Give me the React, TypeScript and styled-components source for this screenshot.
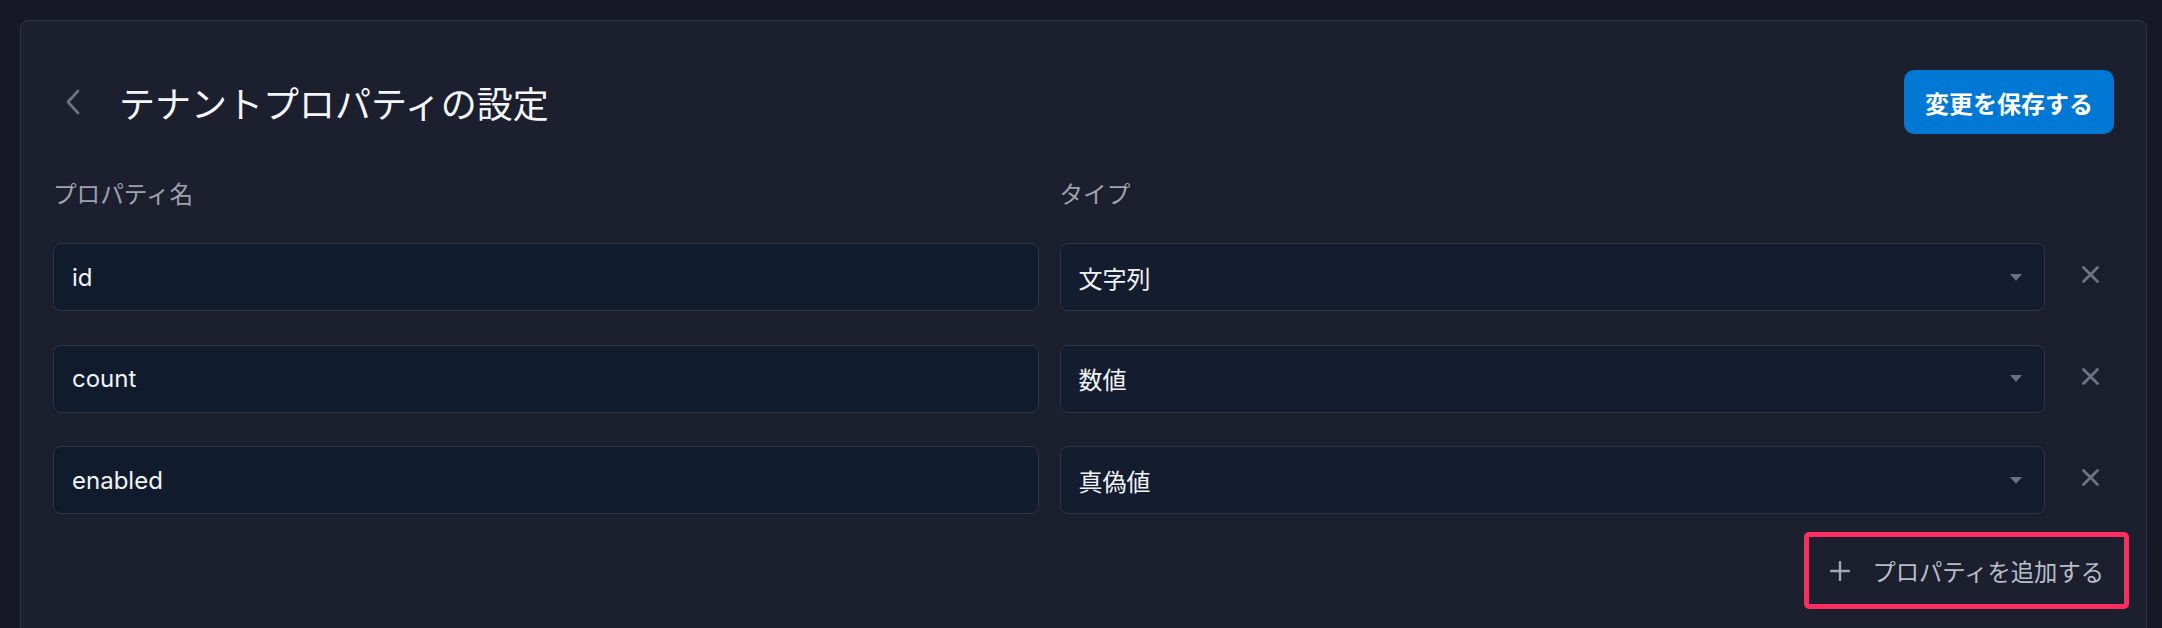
import React from "react";
import styled, { createGlobalStyle } from "styled-components";

const GlobalStyle = createGlobalStyle`
  html, body {
    margin: 0;
    padding: 0;
    background: #161925;
    overflow: hidden;
  }
  body {
    font-family: "Inter", "Noto Sans CJK JP", sans-serif;
    color: #f1f3f5;
  }
  * { box-sizing: border-box; }
`;

const Page = styled.main`
  padding: 20px 15px 0 20px;
`;

const Card = styled.section`
  background: #1c1f2e;
  border: 1px solid #30344a;
  border-radius: 8px;
  padding: 49px 32px 60px;
  min-height: 720px;
`;

const Header = styled.header`
  display: flex;
  align-items: center;
  justify-content: space-between;
  height: 64px;
`;

const TitleGroup = styled.div`
  display: flex;
  align-items: center;
  gap: 26px;
`;

const BackButton = styled.button`
  width: 40px;
  height: 40px;
  display: flex;
  align-items: center;
  justify-content: center;
  background: transparent;
  border: none;
  padding: 0;
  cursor: pointer;
`;

const Title = styled.h1`
  margin: 0;
  font-size: 36px;
  font-weight: 400;
  line-height: 1;
  color: #f4f5f7;
  font-family: "Noto Sans CJK JP", sans-serif;
`;

const SaveButton = styled.button`
  height: 64px;
  padding: 0 21px;
  background: #0078d4;
  border: none;
  border-radius: 10px;
  color: #ffffff;
  font-family: "Noto Sans CJK JP", sans-serif;
  font-size: 24px;
  font-weight: 700;
  cursor: pointer;
`;

const Grid = styled.div`
  display: grid;
  grid-template-columns: 1fr 1fr 48px;
  column-gap: 21px;
  align-items: center;
`;

const ColumnHeads = styled(Grid)`
  margin-top: 43px;
  font-family: "Noto Sans CJK JP", sans-serif;
  font-size: 23.6px;
  line-height: 32px;
  color: #9ea2ad;
`;

const Rows = styled.div`
  display: flex;
  flex-direction: column;
  gap: 33.5px;
  margin-top: 34px;
`;

const TextInput = styled.input`
  width: 100%;
  height: 68px;
  background: #111b2e;
  border: 1px solid #2d3446;
  border-radius: 8px;
  padding: 0 18px;
  font-family: "Inter", "Noto Sans CJK JP", sans-serif;
  font-size: 24px;
  color: #f1f3f5;
  outline: none;
`;

const SelectBox = styled.div`
  height: 68px;
  display: flex;
  align-items: center;
  justify-content: space-between;
  background: #141c2f;
  border: 1px solid #2d3446;
  border-radius: 8px;
  padding: 0 22px 0 18px;
  font-family: "Noto Sans CJK JP", sans-serif;
  font-size: 24px;
  color: #f1f3f5;
`;

const RemoveButton = styled.button`
  width: 48px;
  height: 48px;
  display: flex;
  align-items: center;
  justify-content: center;
  background: transparent;
  border: none;
  padding: 0 0 5px;
  cursor: pointer;
`;

const Footer = styled.div`
  display: flex;
  justify-content: flex-end;
  margin-top: 18px;
  margin-right: -15px;
`;

const Highlight = styled.div`
  border: 5px solid #ff2d5f;
  border-radius: 5px;
  padding: 10px;
`;

const AddButton = styled.button`
  height: 47px;
  display: flex;
  align-items: center;
  gap: 22px;
  padding: 0 10px 0 11px;
  background: transparent;
  border: none;
  color: #b9bdc8;
  font-family: "Noto Sans CJK JP", sans-serif;
  font-size: 23.3px;
  cursor: pointer;
`;

const rows = [
  { name: "id", type: "文字列" },
  { name: "count", type: "数値" },
  { name: "enabled", type: "真偽値" },
];

const Chevron = () => (
  <svg width="16" height="26" viewBox="0 0 16 26" fill="none">
    <polyline points="13,2 3,13 13,24" stroke="#6e7285" strokeWidth="2.8" strokeLinecap="round" strokeLinejoin="round" />
  </svg>
);

const Caret = () => (
  <svg width="12" height="7" viewBox="0 0 12 7">
    <polygon points="0,0 12,0 6,7" fill="#6b6f80" />
  </svg>
);

const Cross = () => (
  <svg width="17" height="17" viewBox="0 0 17 17" fill="none">
    <path d="M1.5 1.5 L15.5 15.5 M15.5 1.5 L1.5 15.5" stroke="#6e7285" strokeWidth="2.8" strokeLinecap="round" />
  </svg>
);

const Plus = () => (
  <svg width="20" height="20" viewBox="0 0 20 20" fill="none">
    <path d="M10 1 V19 M1 10 H19" stroke="#a3a7b3" strokeWidth="2.4" strokeLinecap="round" />
  </svg>
);

export default function App() {
  return (
    <>
      <GlobalStyle />
      <Page>
        <Card>
          <Header>
            <TitleGroup>
              <BackButton aria-label="戻る">
                <Chevron />
              </BackButton>
              <Title>テナントプロパティの設定</Title>
            </TitleGroup>
            <SaveButton>変更を保存する</SaveButton>
          </Header>
          <ColumnHeads>
            <span>プロパティ名</span>
            <span>タイプ</span>
            <span />
          </ColumnHeads>
          <Rows>
            {rows.map((r) => (
              <Grid key={r.name}>
                <TextInput defaultValue={r.name} />
                <SelectBox>
                  <span>{r.type}</span>
                  <Caret />
                </SelectBox>
                <RemoveButton aria-label="削除">
                  <Cross />
                </RemoveButton>
              </Grid>
            ))}
          </Rows>
          <Footer>
            <Highlight>
              <AddButton>
                <Plus />
                <span>プロパティを追加する</span>
              </AddButton>
            </Highlight>
          </Footer>
        </Card>
      </Page>
    </>
  );
}
